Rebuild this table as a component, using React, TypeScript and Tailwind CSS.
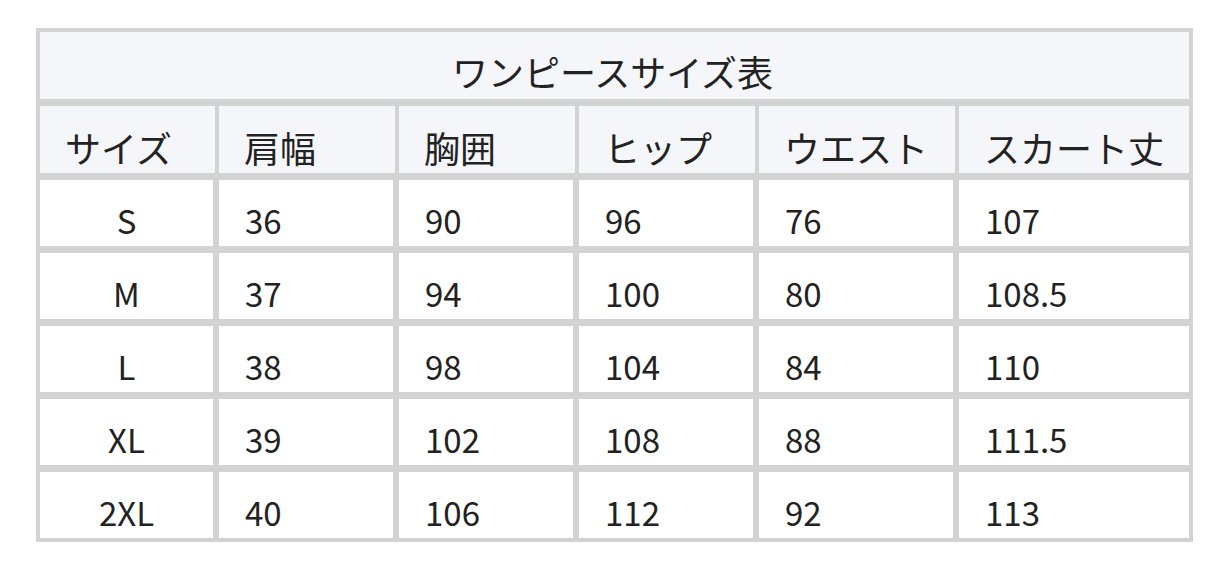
const HEAD = ["サイズ", "肩幅", "胸囲", "ヒップ", "ウエスト", "スカート丈"];

const ROWS = [
  ["S", "36", "90", "96", "76", "107"],
  ["M", "37", "94", "100", "80", "108.5"],
  ["L", "38", "98", "104", "84", "110"],
  ["XL", "39", "102", "108", "88", "111.5"],
  ["2XL", "40", "106", "112", "92", "113"],
];

export default function App() {
  return (
    <div
      className="w-[1228px] h-[569px] bg-white pt-[28px] pl-[36px] text-[#222]"
      style={{ fontFamily: '"Noto Sans CJK JP", "Noto Sans", sans-serif' }}
    >
      <div className="w-[1157px] border-4 border-[#d3d3d3] bg-[#d3d3d3] flex flex-col gap-[7px]">
        <div className="h-[67px] bg-[#f5f6fa] flex items-end justify-center pb-[2px] pr-[4px] text-[36px] leading-[52px]">
          ワンピースサイズ表
        </div>
        <div className="grid grid-cols-[175px_176px_176px_176px_196px_1fr] gap-x-[4px]">
          {HEAD.map((h) => (
            <div
              key={h}
              className="h-[67px] bg-[#f5f6fa] flex items-end pl-[25px] text-[36px] leading-[52px]"
            >
              {h}
            </div>
          ))}
        </div>
        {ROWS.map((row) => (
          <div
            key={row[0]}
            className="grid grid-cols-[173px_174px_174px_174px_194px_1fr] gap-x-[6px]"
          >
            {row.map((v, i) => (
              <div
                key={i}
                className={
                  "h-[66px] bg-white flex items-end text-[33px] leading-[52px] " +
                  (i === 0 ? "justify-center" : "pl-[26px]")
                }
              >
                {v}
              </div>
            ))}
          </div>
        ))}
      </div>
    </div>
  );
}
